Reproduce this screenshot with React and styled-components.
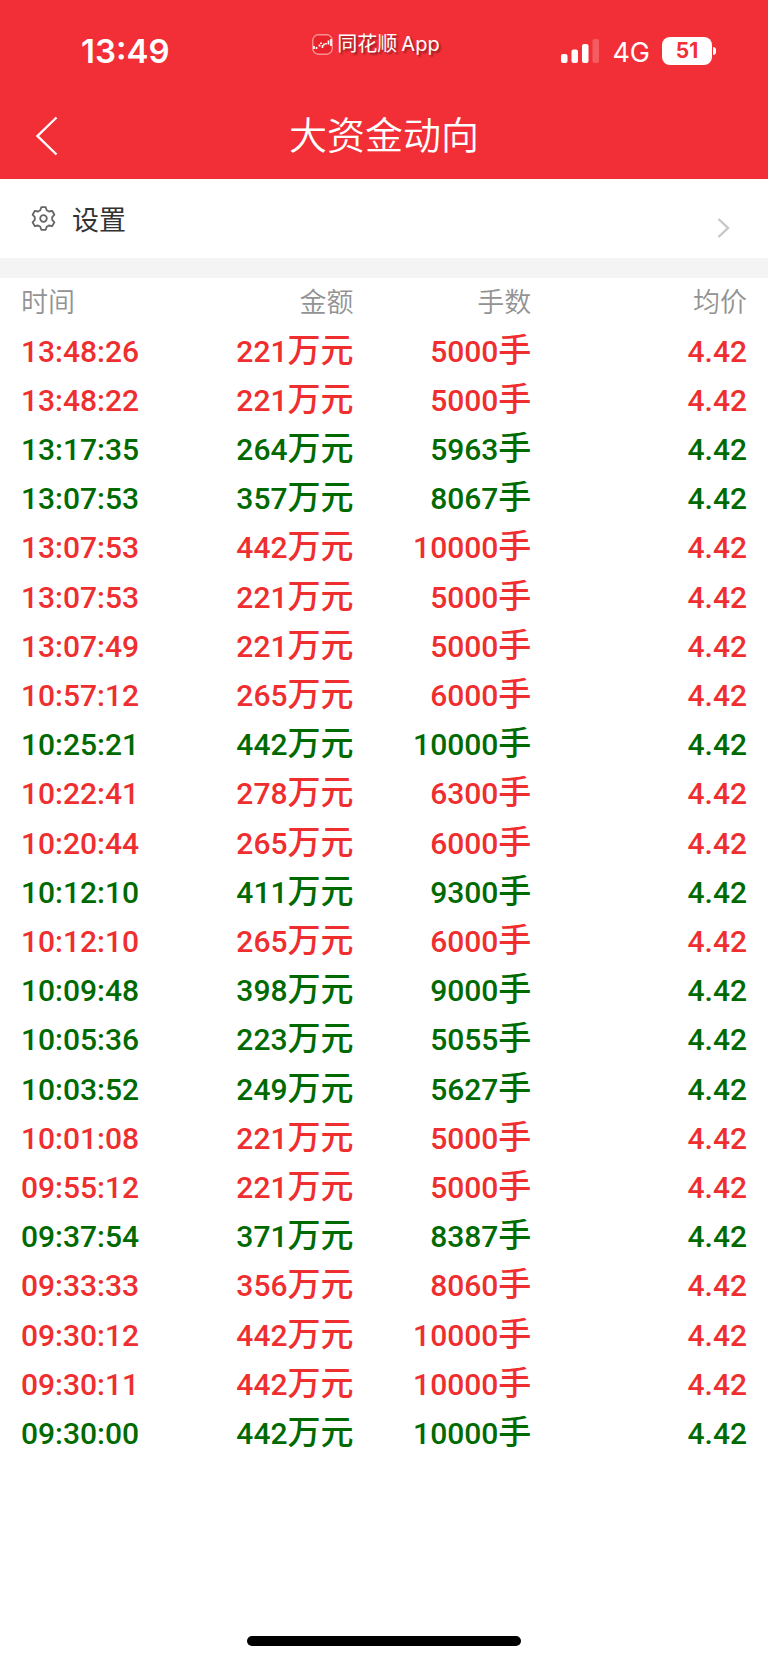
import styled, { createGlobalStyle } from "styled-components";

const GlobalStyle = createGlobalStyle`
  * {
    box-sizing: border-box;
    margin: 0;
    padding: 0;
  }

  :root {
    --color-brand: #f22f37;
    --color-buy: #ee2e2f;
    --color-sell: #006a00;
    --color-grey-100: #f4f4f4;
    --color-grey-300: #c7c7c7;
    --color-grey-500: #939393;
    --color-grey-800: #333;
  }

  body {
    background-color: #fff;
    font-family: "Noto Sans CJK SC", sans-serif;
  }

  button {
    border: none;
    background: none;
    font: inherit;
    color: inherit;
    cursor: pointer;
  }
`;

const Page = styled.div`
  display: flex;
  flex-direction: column;
  min-height: 100vh;
`;

const Header = styled.header`
  background-color: var(--color-brand);
  color: #fff;
`;

const StatusBar = styled.div`
  display: grid;
  grid-template-columns: 1fr auto 1fr;
  height: 92px;
  padding-top: 10px;
  font-family: Inter, sans-serif;
`;

const Clock = styled.time`
  align-self: center;
  padding-left: 81px;
  font-size: 33px;
  font-weight: 600;
  line-height: 40px;
`;

const Brand = styled.div`
  display: flex;
  align-items: center;
  gap: 4px;
  height: 68px;
  margin-right: 16px;
  font-family: Inter, "Noto Sans CJK SC", sans-serif;
  font-size: 20px;
  line-height: 28px;
  text-shadow: 2px 2px 2px rgba(0, 0, 0, 0.4);
`;

const Indicators = styled.div`
  display: flex;
  align-items: center;
  justify-content: flex-end;
  gap: 12px;
  padding-right: 52px;
`;

const Network = styled.span`
  padding-top: 4px;
  font-size: 27px;
  line-height: 32px;
`;

const Battery = styled.div`
  display: flex;
  align-items: center;
  gap: 1px;
`;

const BatteryLevel = styled.span`
  width: 50px;
  border-radius: 8px;
  background-color: #fff;
  color: var(--color-brand);
  font-size: 21px;
  font-weight: 700;
  line-height: 28px;
  text-align: center;
`;

const BatteryTip = styled.span`
  width: 3px;
  height: 8px;
  border-radius: 0 4px 4px 0;
  background-color: #fff;
`;

const NavBar = styled.div`
  display: grid;
  grid-template-columns: 96px 1fr 96px;
  align-items: center;
  height: 87px;
`;

const BackButton = styled.button`
  display: flex;
  align-items: center;
  height: 87px;
  padding-left: 35px;
`;

const Title = styled.h1`
  padding-bottom: 6px;
  font-size: 38px;
  font-weight: 350;
  line-height: 48px;
  text-align: center;
`;

const SettingsButton = styled.button`
  display: flex;
  align-items: center;
  gap: 16px;
  height: 79px;
  padding: 0 38px 0 31px;
  color: var(--color-grey-800);
  font-size: 27px;
  line-height: 40px;
`;

const ArrowSlot = styled.span`
  display: flex;
  margin-left: auto;
  padding-top: 18px;
`;

const Divider = styled.div`
  height: 20px;
  background-color: var(--color-grey-100);
`;

const TableBox = styled.main`
  display: flex;
  flex: 1;
  padding: 0 21px;
`;

const Table = styled.table`
  width: 100%;
  table-layout: fixed;
  border-collapse: collapse;
`;

const HeadCell = styled.th`
  width: ${(props) => props.$width};
  height: 49px;
  padding-bottom: 4px;
  color: var(--color-grey-500);
  font-size: 27px;
  font-weight: 350;
  line-height: 40px;
  text-align: ${(props) => props.$align || "right"};
`;

const TradeRow = styled.tr`
  color: ${(props) =>
    props.$side === "buy" ? "var(--color-buy)" : "var(--color-sell)"};
`;

const Cell = styled.td`
  font-family: Roboto, "Noto Sans CJK SC", sans-serif;
  font-size: 30px;
  font-weight: 500;
  line-height: 48px;
  text-align: ${(props) => props.$align || "right"};
  white-space: nowrap;
`;

const Unit = styled.span`
  font-family: "Noto Sans CJK SC", sans-serif;
  font-size: 33px;
  line-height: 40px;
`;

const Footer = styled.footer`
  display: flex;
  align-items: flex-end;
  justify-content: center;
  height: 204px;
  padding-bottom: 17px;
`;

const HomeIndicator = styled.div`
  width: 35.6%;
  height: 10px;
  border-radius: 5px;
  background-color: #000;
`;

const trades = [
  ["13:48:26", 221, 5000, "buy"],
  ["13:48:22", 221, 5000, "buy"],
  ["13:17:35", 264, 5963, "sell"],
  ["13:07:53", 357, 8067, "sell"],
  ["13:07:53", 442, 10000, "buy"],
  ["13:07:53", 221, 5000, "buy"],
  ["13:07:49", 221, 5000, "buy"],
  ["10:57:12", 265, 6000, "buy"],
  ["10:25:21", 442, 10000, "sell"],
  ["10:22:41", 278, 6300, "buy"],
  ["10:20:44", 265, 6000, "buy"],
  ["10:12:10", 411, 9300, "sell"],
  ["10:12:10", 265, 6000, "buy"],
  ["10:09:48", 398, 9000, "sell"],
  ["10:05:36", 223, 5055, "sell"],
  ["10:03:52", 249, 5627, "sell"],
  ["10:01:08", 221, 5000, "buy"],
  ["09:55:12", 221, 5000, "buy"],
  ["09:37:54", 371, 8387, "sell"],
  ["09:33:33", 356, 8060, "buy"],
  ["09:30:12", 442, 10000, "buy"],
  ["09:30:11", 442, 10000, "buy"],
  ["09:30:00", 442, 10000, "sell"],
].map(([time, amount, lots, side]) => ({
  time,
  amount,
  lots,
  side,
  price: 4.42,
}));

function BrandIcon() {
  return (
    <svg width="21" height="21" viewBox="0 0 21 21" fill="none">
      <rect
        x="0.8"
        y="0.8"
        width="19.4"
        height="19.4"
        rx="5.5"
        fill="#e8232b"
        stroke="#f98f93"
        strokeWidth="1.4"
      />
      <path
        d="M2 12v3M4.5 13v2M7.5 10.5v2M9 8.5v1.5M10.5 11v3M12 9.5v2M14 9v1.5M16.5 6.5v4M19 5v7"
        stroke="#fff"
        strokeWidth="1.7"
      />
    </svg>
  );
}

function SignalIcon() {
  return (
    <svg width="39" height="24" viewBox="0 0 39 24" fill="#fff">
      <rect x="0" y="15" width="6.5" height="9" rx="2" />
      <rect x="10.5" y="10.5" width="6.5" height="13.5" rx="2" />
      <rect x="21" y="5" width="6.5" height="19" rx="2" />
      <rect x="31.5" y="0" width="6.5" height="24" rx="2" opacity="0.22" />
    </svg>
  );
}

function BackIcon() {
  return (
    <svg width="23" height="40" viewBox="0 0 23 40" fill="none">
      <path d="M21.5 1.5L2.5 20l19 18.5" stroke="#fff" strokeWidth="2.4" />
    </svg>
  );
}

function GearIcon() {
  return (
    <svg width="25" height="25" viewBox="0 0 25 25" fill="none">
      <path
        d="M10.3 1.2h4.4l1 3 2.2 1.3 3.2-.7 2.3 3.9-2.2 2.5v2.6l2.2 2.5-2.3 3.9-3.2-.7-2.2 1.3-1 3h-4.4l-1-3-2.2-1.3-3.2.7-2.3-3.9 2.2-2.5v-2.6L1.6 8.7l2.3-3.9 3.2.7 2.2-1.3z"
        stroke="#666"
        strokeWidth="1.8"
        strokeLinejoin="round"
      />
      <circle cx="12.5" cy="12.5" r="3.3" stroke="#666" strokeWidth="1.8" />
    </svg>
  );
}

function ArrowIcon() {
  return (
    <svg width="13" height="20" viewBox="0 0 13 20" fill="none">
      <path
        d="M1.5 1l9.5 9-9.5 9"
        stroke="var(--color-grey-300)"
        strokeWidth="2.4"
      />
    </svg>
  );
}

function Trade({ trade }) {
  const { time, amount, lots, price, side } = trade;

  return (
    <TradeRow $side={side}>
      <Cell $align="left">{time}</Cell>
      <Cell>
        {amount}
        <Unit>万元</Unit>
      </Cell>
      <Cell>
        {lots}
        <Unit>手</Unit>
      </Cell>
      <Cell>{price}</Cell>
    </TradeRow>
  );
}

function App() {
  return (
    <Page>
      <GlobalStyle />
      <Header>
        <StatusBar>
          <Clock>13:49</Clock>
          <Brand>
            <BrandIcon />
            <span>同花顺</span>
            <span>App</span>
          </Brand>
          <Indicators>
            <SignalIcon />
            <Network>4G</Network>
            <Battery>
              <BatteryLevel>51</BatteryLevel>
              <BatteryTip />
            </Battery>
          </Indicators>
        </StatusBar>
        <NavBar>
          <BackButton aria-label="返回">
            <BackIcon />
          </BackButton>
          <Title>大资金动向</Title>
        </NavBar>
      </Header>

      <SettingsButton>
        <GearIcon />
        设置
        <ArrowSlot>
          <ArrowIcon />
        </ArrowSlot>
      </SettingsButton>
      <Divider />

      <TableBox>
        <Table>
          <thead>
            <tr>
              <HeadCell $width="20%" $align="left">
                时间
              </HeadCell>
              <HeadCell $width="25.8%">金额</HeadCell>
              <HeadCell $width="24.5%">手数</HeadCell>
              <HeadCell $width="29.7%">均价</HeadCell>
            </tr>
          </thead>
          <tbody>
            {trades.map((trade, i) => (
              <Trade trade={trade} key={i} />
            ))}
          </tbody>
        </Table>
      </TableBox>

      <Footer>
        <HomeIndicator />
      </Footer>
    </Page>
  );
}

export default App;
